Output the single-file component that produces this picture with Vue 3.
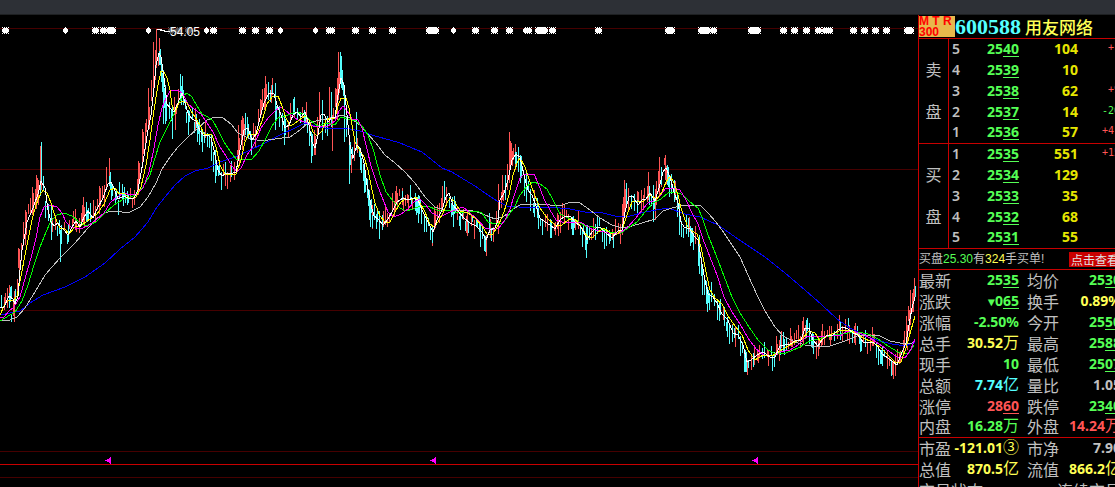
<script setup>
const parse = (s) => s.trim().split(/\s+/).map((p) => p.split(',').map(Number))

const white = parse(`0,308 4,307 9,296 13,299 15,304 18,296 20,270 22,250 25,234 27,222 33,208 38,194 41,181 45,188 48,210 51,222 54,226 58,223 61,227 64,230 68,235 72,227 76,221 80,227 84,217 88,211 93,218 97,209 103,198 108,184 111,182 114,188 118,199 124,196 130,199 134,198 138,190 143,162 148,130 151,115 154,88 156,65 159,53 161,57 164,78 167,104 170,108 174,112 177,105 180,98 182,93 184,99 188,113 192,119 196,121 200,131 204,136 208,135 211,138 214,150 218,170 222,176 227,173 230,174 236,172 240,150 244,130 248,128 252,140 256,134 260,118 264,103 269,93 274,94 277,105 281,115 285,128 289,125 293,115 297,112 301,117 305,112 309,125 312,142 315,148 318,135 321,115 324,114 328,122 332,117 335,118 338,95 341,78 344,85 347,115 350,145 353,158 357,145 360,148 364,163 367,185 371,205 374,216 378,219 383,225 388,219 393,210 397,202 403,198 408,200 413,198 418,200 423,212 428,222 433,232 437,220 442,210 446,197 449,193 453,205 458,211 464,218 470,223 476,226 482,232 486,240 490,230 495,228 498,220 500,200 504,193 508,180 512,160 516,154 520,157 524,175 528,190 532,195 536,206 540,218 545,222 550,225 555,229 560,220 565,216 570,216 575,222 580,226 584,232 587,240 592,232 596,228 600,227 606,233 612,238 618,231 622,230 625,212 629,197 633,196 638,205 642,200 646,199 650,193 655,201 659,188 663,172 666,168 670,177 674,192 678,203 681,222 684,227 690,229 694,236 698,240 701,258 705,280 708,294 713,297 717,303 722,314 728,320 733,333 738,335 743,345 747,362 751,360 757,355 763,352 770,357 775,357 780,346 785,345 790,344 795,341 801,340 805,328 809,328 813,340 818,346 822,340 827,335 833,335 838,330 843,327 848,329 853,333 858,335 863,342 868,343 873,342 878,347 882,354 888,358 893,362 897,365 900,357 903,350 906,343 909,325 912,308 915,297`)

const averages = [
  { color: '#0000ff', points: '0,315 20,311 30,303 43,295 65,287 85,277 105,263 120,249 135,237 148,222 157,207 165,197 175,185 185,176 195,171 208,168 220,162 235,157 250,150 265,143 280,135 295,128 305,123 315,126 330,129 345,128 360,131 375,136 390,140 400,143 412,148 422,152 432,160 442,168 452,172 460,177 475,186 485,193 497,201 507,206 530,208 550,207 570,209 585,212 603,213 615,216 630,216 645,212 668,208 685,214 700,217 718,225 738,239 765,257 785,273 805,290 822,305 837,319 850,328 865,336 880,341 892,344 905,346 915,342' },
  { color: '#c0c0c0', points: '0,321 10,320 17,317 25,308 35,292 45,275 60,258 75,243 88,228 95,220 104,213 112,211 122,212 130,212 140,207 148,197 156,183 162,169 170,157 178,147 188,137 198,128 207,120 215,117 223,118 231,124 238,133 248,138 262,141 275,139 290,137 300,130 308,123 320,120 335,117 342,115 350,118 360,125 367,133 375,142 385,155 395,163 405,172 415,183 425,197 435,207 445,210 470,210 480,213 495,219 503,217 513,209 520,205 530,204 545,204 555,206 563,205 570,202 580,203 590,210 600,218 612,225 622,228 632,226 642,223 655,219 663,211 672,208 680,206 690,205 700,205 708,213 716,222 724,233 732,245 740,257 748,275 757,295 765,311 775,327 783,336 795,342 805,345 820,347 830,346 845,341 857,336 870,335 880,336 890,341 900,343 912,343 915,341' },
  { color: '#00ff00', points: '0,321 5,318 15,312 22,301 28,285 34,265 40,247 46,232 51,221 57,215 64,213 72,216 79,222 86,226 96,222 105,213 114,205 124,199 136,195 143,187 150,175 155,158 160,142 166,130 172,118 178,105 183,96 187,93 192,97 197,106 202,114 208,117 213,121 218,130 224,142 230,151 236,159 252,159 259,151 266,138 272,126 278,118 286,116 295,112 304,114 311,121 318,126 326,123 335,125 341,117 348,119 356,121 362,126 368,135 374,152 380,175 386,192 393,201 400,208 406,211 413,209 420,206 428,206 437,210 446,210 455,212 463,213 476,211 482,213 488,222 495,224 503,223 508,216 514,208 520,195 527,186 533,182 540,184 547,189 553,200 560,214 568,218 576,220 585,226 600,228 610,232 620,234 628,228 637,222 645,212 653,203 661,199 668,193 676,192 683,195 690,202 698,208 702,217 708,235 716,255 724,276 732,297 740,313 749,327 758,340 768,350 776,354 786,353 798,348 810,341 822,338 835,335 848,333 858,332 868,334 878,339 888,346 898,352 908,354 914,345' },
  { color: '#ff00ff', points: '0,318 4,317 9,311 14,307 20,297 26,275 31,258 36,238 40,217 44,207 50,205 57,207 62,213 66,222 71,227 80,229 88,226 96,220 104,213 110,203 117,197 124,193 130,195 137,194 143,188 149,172 154,148 158,125 162,108 166,98 171,90 178,90 183,94 188,104 194,109 201,114 207,123 213,132 220,147 226,156 232,166 237,172 241,168 247,155 252,148 257,138 261,128 268,118 275,111 280,107 285,110 291,115 298,120 305,122 313,126 320,127 328,126 335,121 339,111 343,106 347,111 352,119 358,120 362,128 367,149 371,166 377,184 382,197 388,212 394,217 401,214 408,209 414,202 420,199 426,205 432,213 440,217 448,213 455,210 463,207 470,213 478,220 485,228 493,230 499,228 505,220 510,209 515,193 520,178 524,174 534,174 538,183 544,199 550,210 556,220 562,222 572,222 582,223 592,229 600,231 608,233 620,233 628,227 635,219 642,210 648,203 655,200 660,196 666,188 673,188 680,190 686,200 692,213 698,224 703,239 710,257 717,275 724,297 732,312 740,324 748,338 756,349 764,355 772,356 780,352 790,350 798,345 806,337 815,336 824,337 832,335 840,336 847,331 855,332 865,335 873,340 882,346 890,352 897,357 905,358 911,349 915,339' },
  { color: '#ffff00', points: '0,315 5,304 9,300 13,301 17,296 22,271 25,255 29,235 32,220 36,205 40,195 43,190 47,193 51,203 54,213 57,222 60,228 65,229 69,234 75,227 82,225 90,219 97,214 104,204 110,190 115,188 119,194 124,193 130,199 136,197 141,187 146,165 150,140 154,110 158,85 161,71 164,72 167,78 170,90 172,105 175,112 179,103 183,101 187,103 191,111 195,117 200,125 204,134 208,134 212,135 216,147 220,165 225,174 230,174 236,174 241,160 245,142 249,134 257,134 262,121 267,104 273,96 278,96 282,106 286,118 290,126 294,124 299,120 305,116 309,120 313,132 317,136 322,131 326,120 331,118 335,118 338,106 341,98 346,98 349,108 352,125 355,142 360,151 364,157 368,170 371,185 375,203 380,216 385,222 390,222 395,212 401,202 406,199 411,200 416,197 420,203 425,212 430,224 434,227 438,222 443,213 447,203 450,198 455,202 460,211 468,213 475,218 482,226 487,234 493,234 499,224 504,212 509,195 513,175 517,163 520,158 525,167 530,182 535,196 540,208 547,218 555,225 562,225 568,220 575,219 581,227 587,236 592,238 598,232 604,228 610,233 616,235 622,230 627,215 632,202 637,201 643,202 650,195 657,199 662,192 666,182 670,176 674,183 678,195 681,208 685,220 688,227 692,231 697,234 701,247 706,272 710,290 715,298 722,304 728,316 735,326 742,335 748,350 755,360 763,355 772,356 780,351 788,346 795,342 803,338 809,331 815,333 820,341 827,336 834,333 842,330 850,330 857,334 863,338 872,342 880,347 887,354 895,362 901,362 906,348 911,330 915,316' },
  { color: '#ffffff', points: white.map((p) => p.join(',')).join(' ') },
]

const upSpikes = parse(`7,288,308 9,285,300 14,291,322 18,248,268 19,253,275 25,210,245 26,212,235 32,187,215 36,175,200 38,180,205 40,146,190 75,209,230 83,197,215 99,186,205 109,158,185 138,161,195 142,129,165 145,123,150 148,88,125 153,42,95 155,50,80 156,29,60 159,38,58 175,110,130 195,108,130 225,165,186 238,125,160 242,116,150 260,99,115 265,76,110 272,78,95 306,102,125 314,130,155 319,92,125 329,87,125 332,115,151 337,78,120 338,52,100 351,155,173 372,205,229 395,191,212 402,188,205 434,207,230 442,186,212 467,210,236 486,235,256 498,184,234 502,175,200 507,164,190 509,132,160 510,141,165 515,144,170 534,190,210 564,205,220 622,204,235 624,180,215 641,190,210 648,172,200 655,190,220 659,157,195 665,155,180 675,181,200 747,360,375 803,319,345 822,324,345 855,323,345 895,360,376 907,325,350 909,310,335 910,290,325 914,278,300`)
const downSpikes = parse(`1,301,308 10,287,302 11,315,322 41,142,182 51,205,240 60,230,262 110,172,190 118,200,215 122,184,200 161,60,82 163,70,124 165,85,124 172,105,139 180,74,100 182,76,95 188,110,135 199,120,145 202,130,152 211,135,160 215,150,183 245,113,135 251,135,155 268,82,100 275,83,130 284,115,145 294,97,115 311,140,163 322,100,140 331,92,125 340,52,80 341,56,88 344,90,142 349,140,184 356,112,150 364,165,193 369,190,220 379,215,239 410,185,200 418,195,223 432,225,243 444,181,200 453,205,227 480,225,243 484,235,251 505,175,200 518,147,165 520,155,180 526,170,202 538,205,229 551,220,238 582,228,247 586,225,258 613,232,248 626,183,205 637,200,215 653,185,222 661,167,185 667,165,185 679,200,235 690,226,246 692,228,242 699,235,274 702,265,295 707,290,312 732,325,342 745,350,372 780,335,355 806,320,338 840,321,340 860,335,352 880,350,364 915,286,297`)

const priceAt = (x) => {
  const i = white.findIndex((p) => p[0] >= x)
  if (i < 0) return white[white.length - 1][1]
  if (i === 0) return white[0][1]
  const [a, b] = [white[i - 1], white[i]]
  return a[1] + ((b[1] - a[1]) * (x - a[0])) / (b[0] - a[0])
}

let seed = 71
const random = () => {
  seed = (seed * 16807) % 2147483647
  return seed / 2147483647
}

let up = ''
let down = ''
for (let x = 1; x < 914; x += random() < 0.3 ? 1 : random() < 0.6 ? 2 : 3) {
  const slope = priceAt(x + 3) - priceAt(x - 1)
  const mid = priceAt(x + 2) + (random() - 0.5) * 14
  const size = 6 + random() * 14 + Math.min(Math.abs(slope) * 0.3, 6)
  const bar = `M${x + 0.5} ${Math.round(mid - size / 2)}v${Math.round(size)}`
  if (slope + (random() - 0.5) * 14 < 0) up += bar
  else down += bar
}
const toPath = (list) => list.map(([x, t, b]) => `M${x + 0.5} ${t}V${b}`).join('')
up += toPath(upSpikes)
down += toPath(downSpikes)

const stars = [5, 95, 103, 109, 112, 213, 242, 255, 269, 329, 331, 355, 372, 392, 429, 432, 435, 475, 494, 509, 528, 538, 541, 544, 552, 598, 668, 671, 701, 704, 707, 713, 751, 754, 757, 783, 794, 806, 818, 825, 829, 853, 864, 875, 886, 907, 910]
const dimStars = [171, 178, 188]
const diamonds = [65, 148, 206, 280, 315, 453, 525]
const flags = [108, 433, 755]

const books = [
  { chars: ['卖', '盘'], rows: [
    [5, '40', '104', '+', 'up'],
    [4, '39', '10', '', ''],
    [3, '38', '62', '+9', 'up'],
    [2, '37', '14', '-20', 'down wide'],
    [1, '36', '57', '+4', 'up wide'],
  ] },
  { chars: ['买', '盘'], rows: [
    [1, '35', '551', '+15', 'up wide'],
    [2, '34', '129', '', ''],
    [3, '33', '35', '', ''],
    [4, '32', '68', '', ''],
    [5, '31', '55', '', ''],
  ] },
]

const v = (c, text, tail = '', unit = '', arrow = '') => ({ c, text, tail, unit, arrow })
const groups = [
  [
    ['最新', v('g', '25', '35'), '均价', v('g', '25', '30')],
    ['涨跌', v('g', '0', '65', '', '▼'), '换手', v('y', '0.89%')],
    ['涨幅', v('g', '-2.50%'), '今开', v('g', '25', '50')],
    ['总手', v('y', '30.52', '', '万'), '最高', v('g', '25', '88')],
    ['现手', v('g', '10'), '最低', v('g', '25', '07')],
    ['总额', v('c', '7.74', '', '亿'), '量比', v('w', '1.05')],
    ['涨停', v('r', '28', '60'), '跌停', v('g', '23', '40')],
    ['内盘', v('g', '16.28', '', '万'), '外盘', v('r', '14.24', '', '万')],
  ],
  [
    ['市盈', v('y', '-121.01', '', '③'), '市净', v('w', '7.90')],
    ['总值', v('y', '870.5', '', '亿'), '流值', v('y', '866.2', '', '亿')],
  ],
]
</script>

<template>
  <div class="app">
    <div class="titlebar"></div>
    <div class="main">
      <div class="chart">
        <svg viewBox="0 15 918 472" preserveAspectRatio="xMaxYMin slice" shape-rendering="crispEdges">
          <defs>
            <path id="star" d="M-2 -2h5v1h1v3h-1v1h-5v-1h-1v-3h1z M-3 -3h1v1h-1z M-1 -3h1v1h-1z M1 -3h1v1h-1z M3 -3h1v1h-1z M-3 3h1v1h-1z M-1 3h1v1h-1z M1 3h1v1h-1z M3 3h1v1h-1z" />
            <path id="diamond" d="M0 -3h1v1h1v1h1v3h-1v1h-1v1h-1v-1h-1v-1h-1v-3h1v-1h1z" />
            <path id="flag" d="M-3 0h2v-1h2v-1h1v-1h1v7h-1v-1h-1v-1h-2v-1h-2z" />
          </defs>
          <path d="M0 28.5H918M0 169.5H918M0 310.5H918M0 451.5H918M0 477.5H918" stroke="#460000" />
          <path d="M0 464.5H918" stroke="#c80000" />
          <path :d="up" stroke="#ff5555" />
          <path :d="down" stroke="#55ffff" />
          <polyline v-for="a in averages" :key="a.color" :points="a.points" :stroke="a.color" fill="none" />
          <g fill="#555555"><use v-for="x in dimStars" :key="x" href="#star" :x="x" y="30" /></g>
          <g fill="#ffffff">
            <use v-for="x in stars" :key="x" href="#star" :x="x" y="30" />
            <use v-for="x in diamonds" :key="x" href="#diamond" :x="x" y="30" />
          </g>
          <path d="M157 29.5h5M160 30.5h5M164 31.5h6" stroke="#ffffff" />
          <text class="peak" x="170" y="36">54.05</text>
          <g fill="#ff00ff"><use v-for="x in flags" :key="x" href="#flag" :x="x" y="460" /></g>
        </svg>
      </div>
      <aside class="panel">
        <div class="sheet">
          <header class="head">
            <div class="badge"><span>M T R</span><span>300</span></div>
            <span class="code">600588</span>
            <span class="name">用友网络</span>
          </header>
          <table v-for="(b, i) in books" :key="i" class="book">
            <tbody>
              <tr v-for="(r, j) in b.rows" :key="j">
                <th v-if="j === 0" rowspan="5" class="side"><span v-for="ch in b.chars" :key="ch">{{ ch }}</span></th>
                <td class="level">{{ r[0] }}</td>
                <td class="price">25<u>{{ r[1] }}</u></td>
                <td class="qty">{{ r[2] }}</td>
                <td class="delta" :class="r[4]">{{ r[3] }}</td>
              </tr>
            </tbody>
          </table>
          <div class="alert">
            <span>买盘<span class="g">25.30</span>有<span class="y">324</span>手买单!</span>
            <button type="button">点击查看</button>
          </div>
          <table v-for="(g, i) in groups" :key="'g' + i" class="info" :class="{ open: i === 1 }">
            <tbody>
              <tr v-for="r in g" :key="r[0]">
                <th>{{ r[0] }}</th>
                <td :class="r[1].c"><span v-if="r[1].arrow" class="arrow">{{ r[1].arrow }}</span>{{ r[1].text }}<u v-if="r[1].tail">{{ r[1].tail }}</u><span v-if="r[1].unit" class="unit">{{ r[1].unit }}</span></td>
                <th class="second">{{ r[2] }}</th>
                <td :class="r[3].c">{{ r[3].text }}<u v-if="r[3].tail">{{ r[3].tail }}</u><span v-if="r[3].unit" class="unit">{{ r[3].unit }}</span></td>
              </tr>
            </tbody>
          </table>
          <div class="state"><span>交易状态</span><span>连续交易</span></div>
        </div>
      </aside>
    </div>
  </div>
</template>

<style>
body { background: #000; overflow: hidden; }
</style>

<style scoped>
.app {
  display: flex;
  flex-direction: column;
  height: 100vh;
  overflow: hidden;
  background: #000;
  color: #c0c0c0;
  font-family: "Noto Sans", "Noto Sans CJK SC", sans-serif;
  font-size: 14px;
}
.titlebar { flex: none; height: 14px; background: #2d3036; border-bottom: 1px solid #1e2022; }
.main { flex: 1; min-height: 0; display: grid; grid-template-columns: minmax(0, 1fr) 197px; }
.chart { min-height: 0; overflow: hidden; }
.chart svg { display: block; width: 100%; height: 100%; }
.peak { fill: #fff; font: 12px "Liberation Sans", sans-serif; }
.panel { min-height: 0; overflow: hidden; border-left: 1px solid #c80000; }
.sheet { width: 202px; }
.head {
  display: flex;
  align-items: center;
  box-sizing: border-box;
  height: 24px;
  border-bottom: 1px solid #c80000;
  white-space: nowrap;
}
.badge {
  display: flex;
  flex-direction: column;
  width: 36px;
  height: 21px;
  background: #e8b84c;
  color: #f00;
  font: bold 12px/11px "Liberation Sans", sans-serif;
}
.code { color: #55ffff; font: bold 22px/22px "Liberation Serif", serif; }
.name { margin-left: 4px; color: #ffff55; font: 500 17px/22px "Noto Sans CJK SC", sans-serif; }
table { width: 202px; table-layout: fixed; border-collapse: separate; border-spacing: 0; }
td, th { box-sizing: border-box; height: 21px; padding: 0 0 2px; line-height: 18px; white-space: nowrap; }
td { font-weight: 700; text-align: right; }
th { font: 400 16px/18px "Noto Sans CJK SC", sans-serif; text-align: left; }
u { text-decoration: underline 1px; text-underline-offset: 2px; }
.book tr:last-child td, .book .side { border-bottom: 1px solid #c80000; }
.book .side { width: 30px; border-right: 1px solid #c80000; text-align: center; }
.side span { display: block; line-height: 42px; }
.book .level { width: 25px; padding-left: 3px; text-align: left; font-weight: 600; }
.book .price { width: 45px; color: #55ff55; }
.book .qty { width: 59px; color: #e6e600; }
.book .delta { padding: 0 0 4px 30px; text-align: left; font: 10px/16px "DejaVu Sans Mono", monospace; }
.book .wide { padding-left: 24px; }
.up { color: #ff5555; }
.down { color: #55ff55; }
.alert {
  display: flex;
  align-items: center;
  justify-content: space-between;
  box-sizing: border-box;
  height: 21px;
  border-bottom: 1px solid #c80000;
  font: 12px/20px "Liberation Sans", "Noto Sans CJK SC", sans-serif;
  white-space: nowrap;
}
.alert button {
  height: 15px;
  padding: 0 2px;
  border: 0;
  background: #c80000;
  color: #e0e0e0;
  font: 12px/15px "Noto Sans CJK SC", sans-serif;
}
.info th { width: 32px; }
.info .second { width: 40px; padding-left: 8px; }
.info td:nth-child(2) { width: 68px; }
.info:not(.open) tr:last-child > * { border-bottom: 1px solid #c80000; }
.unit { font: 400 16px/14px "Noto Sans CJK SC", sans-serif; }
.arrow { font: 12px/12px "Liberation Mono", monospace; }
.g { color: #55ff55; }
.y { color: #ffff55; }
.c { color: #55ffff; }
.r { color: #ff5555; }
.w { color: #c0c0c0; }
.state { display: flex; justify-content: space-between; font: 400 16px/20px "Noto Sans CJK SC", sans-serif; }
</style>
